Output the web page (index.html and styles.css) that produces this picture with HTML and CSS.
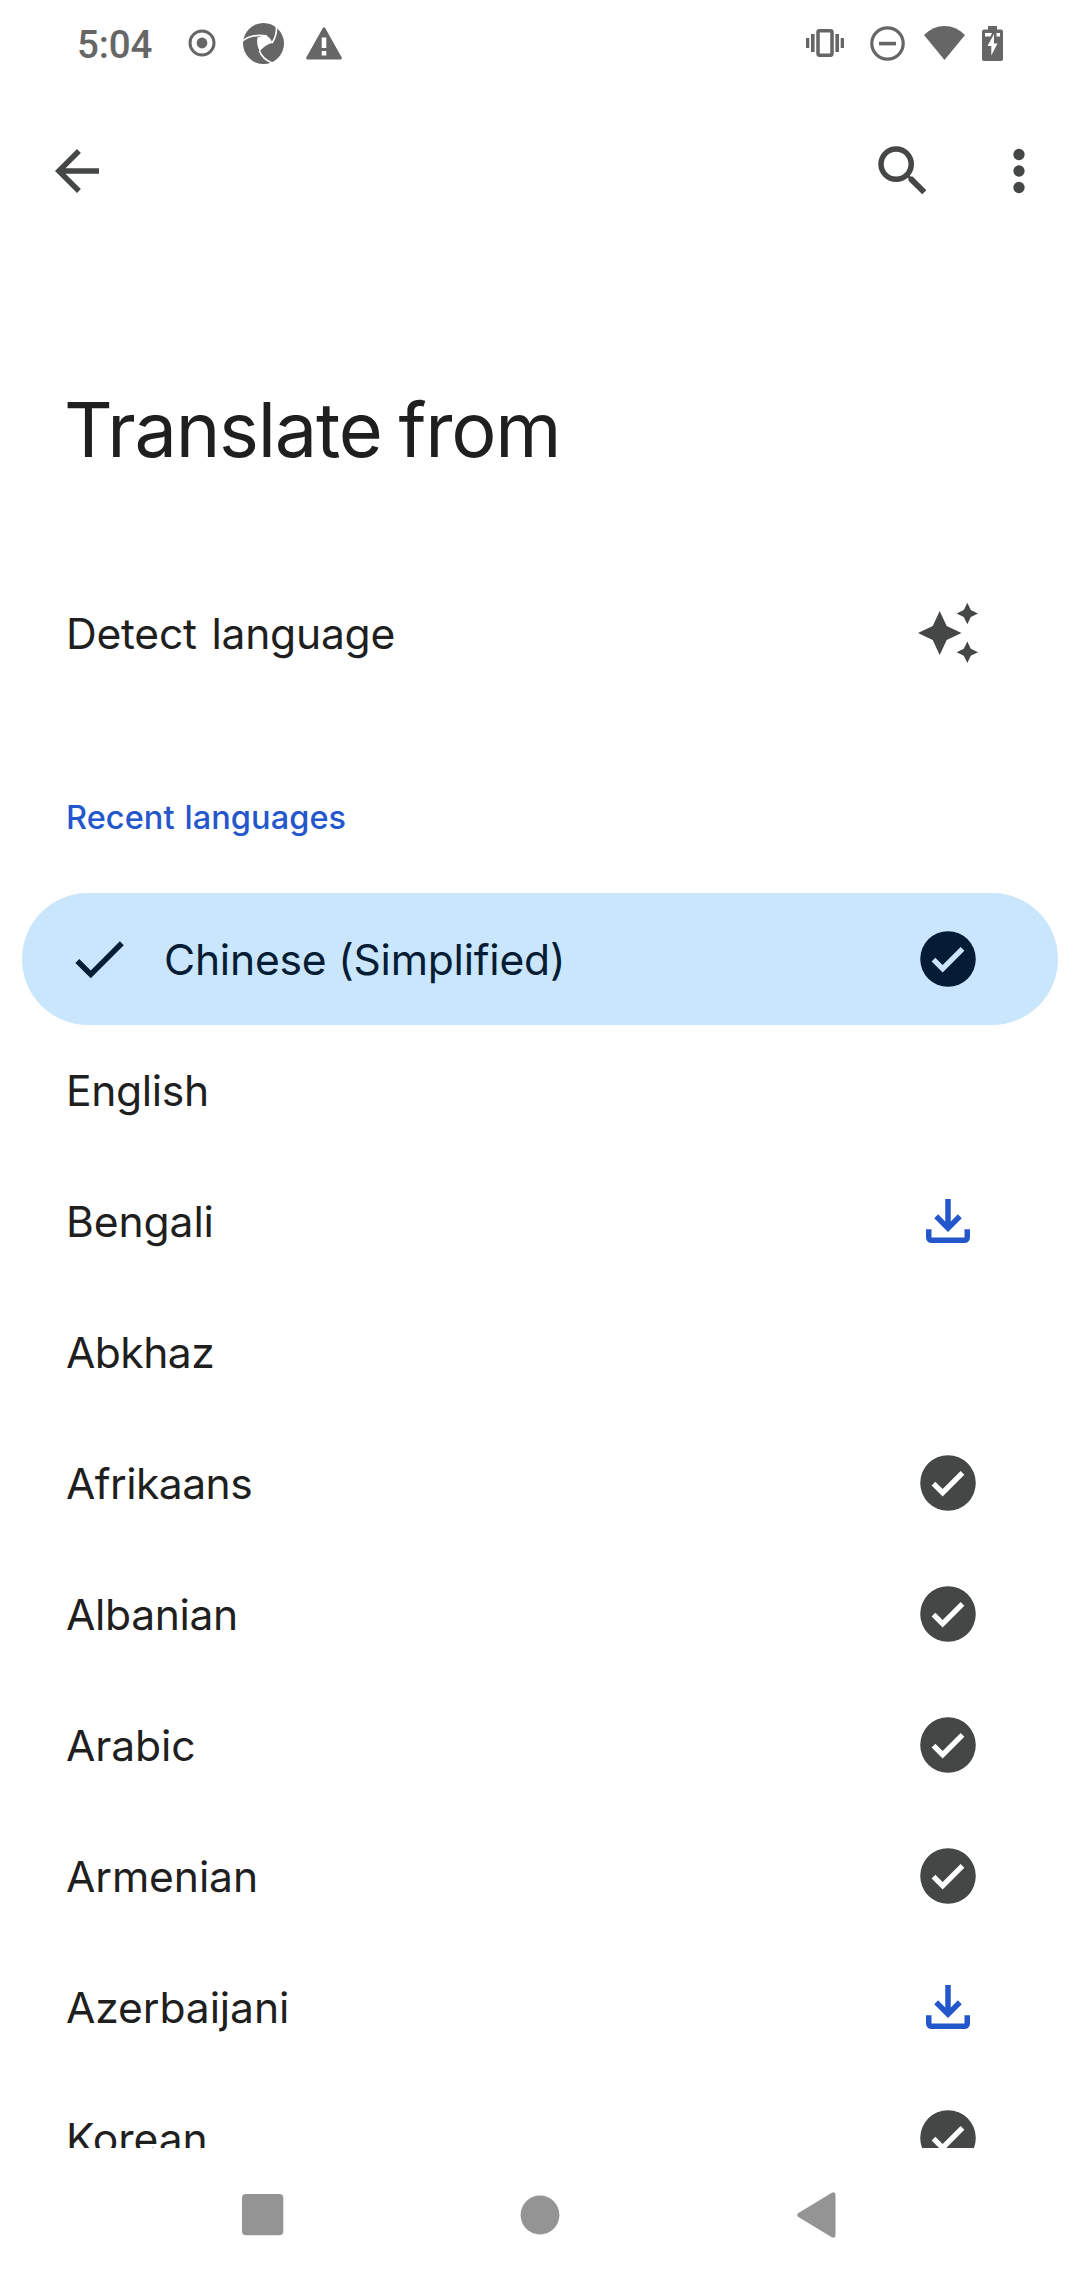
FILE: index.html
```html
<!DOCTYPE html>
<html lang="en">
<head>
<meta charset="utf-8">
<title>Translate from</title>
<link rel="stylesheet" href="styles.css">
</head>
<body>
<svg class="defs" aria-hidden="true">
  <symbol id="done" viewBox="0 0 24 24"><path fill-rule="evenodd" d="M12 1.9a10.1 10.1 0 1 1 0 20.2a10.1 10.1 0 1 1 0-20.2zM6.05 12.9l4 4.05L17.95 9l-1.35-1.35-6.55 6.5-2.65-2.6z"/></symbol>
  <symbol id="download" viewBox="0 0 24 24"><path d="M12 16l-5-5 1.4-1.45 2.6 2.6V4h2v8.15l2.6-2.6L17 11zM6 20q-.825 0-1.413-.587Q4 18.825 4 18v-3h2v3h12v-3h2v3q0 .825-.587 1.413Q18.825 20 18 20z"/></symbol>
</svg>
<div class="screen">
  <main class="content">
    <header class="status">
      <div class="status-left">
        <span class="time">5:04</span>
        <svg class="record" width="28" height="28" viewBox="0 0 28 28"><circle cx="14" cy="14" r="12" fill="none" stroke="currentColor" stroke-width="3"/><circle cx="14" cy="14" r="5.4"/></svg>
        <svg class="pinwheel" width="41" height="41" viewBox="0 0 123 123"><circle cx="61.5" cy="61.5" r="61.5"/><path fill="#fff" d="M43 44Q58 36 72 39Q84 46 88 60Q68 64 50 85Q40 64 43 44z"/><path fill="none" stroke="#fff" stroke-width="5" d="M-2 54C16 38 46 34 72 39M100 10C102 28 96 46 87 60M49 83C56 102 68 112 88 120"/></svg>
        <svg class="warning" width="36" height="33" viewBox="0 0 36 33"><path fill-rule="evenodd" d="M16.8.9a1.4 1.4 0 0 1 2.4 0L35.7 30.5a1.4 1.4 0 0 1-1.2 2H1.5a1.4 1.4 0 0 1-1.2-2zM15.7 10.5v10.500h4.600V10.500zM15.700 24v4.500h4.600V24z"/></svg>
      </div>
      <div class="status-right">
        <svg class="vibrate" width="38" height="28" viewBox="0 0 38 28"><rect x="12" y="1.800" width="14" height="24.500" rx="1.500" fill="none" stroke="currentColor" stroke-width="3.500"/><path d="M0 9h3.300v10H0zM5 5h3.600v18H5zM29.400 5H33v18h-3.600zM34.700 9H38v10h-3.300z"/></svg>
        <svg class="dnd" width="35" height="35" viewBox="0 0 35 35"><circle cx="17.500" cy="17.500" r="15.700" fill="none" stroke="currentColor" stroke-width="3.200"/><path d="M9 15.800h17v3.600H9z"/></svg>
        <svg class="wifi" width="41" height="34" viewBox="0 0 41 34"><path d="M20.500 34L0 9Q9 0 20.500 0T41 9z"/></svg>
        <svg class="battery" width="21" height="35" viewBox="0 0 21 35"><path fill-rule="evenodd" d="M6 0h9v3.500h4a2 2 0 0 1 2 2V33a2 2 0 0 1-2 2H2a2 2 0 0 1-2-2V5.500a2 2 0 0 1 2-2h4zM3 7v3.500h5.500L10 7zM14.500 7v3.500H18V7zM12 8L5.500 20h3.800v9.500L15.500 17.500H12z"/></svg>
      </div>
    </header>
    <nav class="toolbar">
      <svg class="icon" viewBox="0 0 24 24"><path d="M20 11H7.830l5.590-5.590L12 4l-8 8 8 8 1.410-1.410L7.830 13H20z"/></svg>
      <div class="actions">
        <svg class="icon" viewBox="0 0 24 24"><path d="M15.500 14h-.79l-.28-.27A6.471 6.471 0 0 0 16 9.500 6.500 6.500 0 1 0 9.500 16c1.610 0 3.090-.59 4.230-1.570l.27.28v.79l5 4.990L20.490 19zm-6 0C7.010 14 5 11.990 5 9.500S7.010 5 9.500 5 14 7.010 14 9.500 11.990 14 9.500 14z"/></svg>
        <svg class="icon" viewBox="0 0 24 24"><circle cx="12" cy="6" r="2.050"/><circle cx="12" cy="12" r="2.050"/><circle cx="12" cy="18" r="2.050"/></svg>
      </div>
    </nav>
    <h1 class="title">Translate from</h1>
    <div class="row detect"><span class="label spaced">Detect language</span>
      <svg class="icon" viewBox="0 0 66 66"><path d="M24.700 11l7 15 14.800 7-14.800 7-7 15-7-15L3 33l14.700-7zM52.300 2.700l3.500 7.300 7.200 3.500-7.200 3.500-3.500 7.300-3.500-7.300-7.200-3.500 7.200-3.500zM52.300 41.500l3.500 7.300 7.200 3.500-7.200 3.500-3.500 7.300-3.500-7.300-7.200-3.500 7.200-3.500z"/></svg>
    </div>
    <h2 class="section">Recent languages</h2>
    <div class="list">
      <div class="row selected">
        <svg class="icon" viewBox="0 0 24 24"><path d="M9 16.170L4.830 12l-1.420 1.410L9 19 21 7l-1.410-1.410z"/></svg>
        <span class="label">Chinese (Simplified)</span>
        <svg class="icon"><use href="#done"/></svg>
      </div>
      <div class="row"><span class="label tight">English</span></div>
      <div class="row"><span class="label">Bengali</span><svg class="icon get"><use href="#download"/></svg></div>
      <div class="row"><span class="label tighter">Abkhaz</span></div>
      <div class="row"><span class="label tighter">Afrikaans</span><svg class="icon"><use href="#done"/></svg></div>
      <div class="row"><span class="label tight">Albanian</span><svg class="icon"><use href="#done"/></svg></div>
      <div class="row"><span class="label">Arabic</span><svg class="icon"><use href="#done"/></svg></div>
      <div class="row"><span class="label">Armenian</span><svg class="icon"><use href="#done"/></svg></div>
      <div class="row"><span class="label">Azerbaijani</span><svg class="icon get"><use href="#download"/></svg></div>
      <div class="row"><span class="label">Korean</span><svg class="icon"><use href="#done"/></svg></div>
    </div>
  </main>
  <footer class="navbar">
    <svg width="42" height="42" viewBox="0 0 42 42"><rect width="41.300" height="41.300" rx="4"/></svg>
    <svg width="40" height="40" viewBox="0 0 40 40"><circle cx="20" cy="20" r="19.400"/></svg>
    <svg width="39" height="46" viewBox="0 0 39 46"><path d="M1 21.200L34.800.8Q38.500-.7 38.500 3V43Q38.500 46.700 34.800 45.200L1 24.800Q-.6 23 1 21.200z"/></svg>
  </footer>
</div>
</body>
</html>
```
FILE: styles.css
```css
* { box-sizing: border-box; }

body {
  margin: 0;
  background: #fff;
  color: #1f1f1f;
  font-family: Inter, Roboto, sans-serif;
}

svg { display: block; flex: none; fill: currentColor; }

.defs { display: none; }

.screen {
  width: 1080px;
  height: 2280px;
  display: flex;
  flex-direction: column;
}

.content {
  height: 2148px;
  overflow: hidden;
}

/* System status bar */
.status {
  height: 86px;
  padding: 0 77px;
  display: flex;
  justify-content: space-between;
  align-items: center;
  color: #666;
}

.status-left, .status-right { display: flex; align-items: center; }
.time { font: 500 38.5px/46px Roboto, sans-serif; letter-spacing: -0.1px; width: 111px; padding-top: 4px; }
.pinwheel { margin-left: 27px; }
.warning { margin-left: 22px; }
.dnd { margin-left: 26px; }
.wifi { margin-left: 19px; }
.battery { margin-left: 17px; }

/* App bar */
.toolbar {
  height: 170px;
  padding: 0 28px 0 44px;
  display: flex;
  justify-content: space-between;
  align-items: center;
  color: #444746;
}

.actions { display: flex; gap: 50px; }
.icon { width: 66px; height: 66px; color: #444746; }

.title {
  margin: 126px 0 0 64px;
  font-size: 75.6px;
  line-height: 96px;
  font-weight: 400;
  letter-spacing: -1.7px;
  word-spacing: -3px;
  letter-spacing: -1.25px;
}

.row {
  height: 131px;
  padding: 33px 99px 0 66px;
  display: flex;
  align-items: flex-start;
  justify-content: space-between;
}

.label {
  font-size: 42.6px;
  line-height: 68px;
  letter-spacing: -0.1px;
  white-space: nowrap;
}

.tight { letter-spacing: -0.35px; }
.tighter { letter-spacing: -0.55px; }
.spaced { letter-spacing: -0.25px; word-spacing: 3px; }

.detect { margin-top: 89px; }

.section {
  margin: 98px 0 53px 66px;
  font-size: 32.5px;
  line-height: 44px;
  font-weight: 500;
  letter-spacing: 0.08px;
  word-spacing: 1px;
  color: #2557cc;
}

.selected {
  height: 132px;
  margin: 0 22px -1px;
  padding: 33px 77px 0 44px;
  border-radius: 66px;
  background: #cae6fc;
  color: #051c35;
}

.selected .icon { color: inherit; }
.selected .label { flex: 1; margin-left: 32px; letter-spacing: -0.22px; }
.icon.get { color: #2557cc; }

/* System navigation bar */
.navbar {
  height: 132px;
  width: 830px;
  margin: 0 auto;
  padding-top: 1px;
  display: grid;
  grid-template-columns: repeat(3, 1fr);
  place-items: center;
  color: #949494;
}
```
